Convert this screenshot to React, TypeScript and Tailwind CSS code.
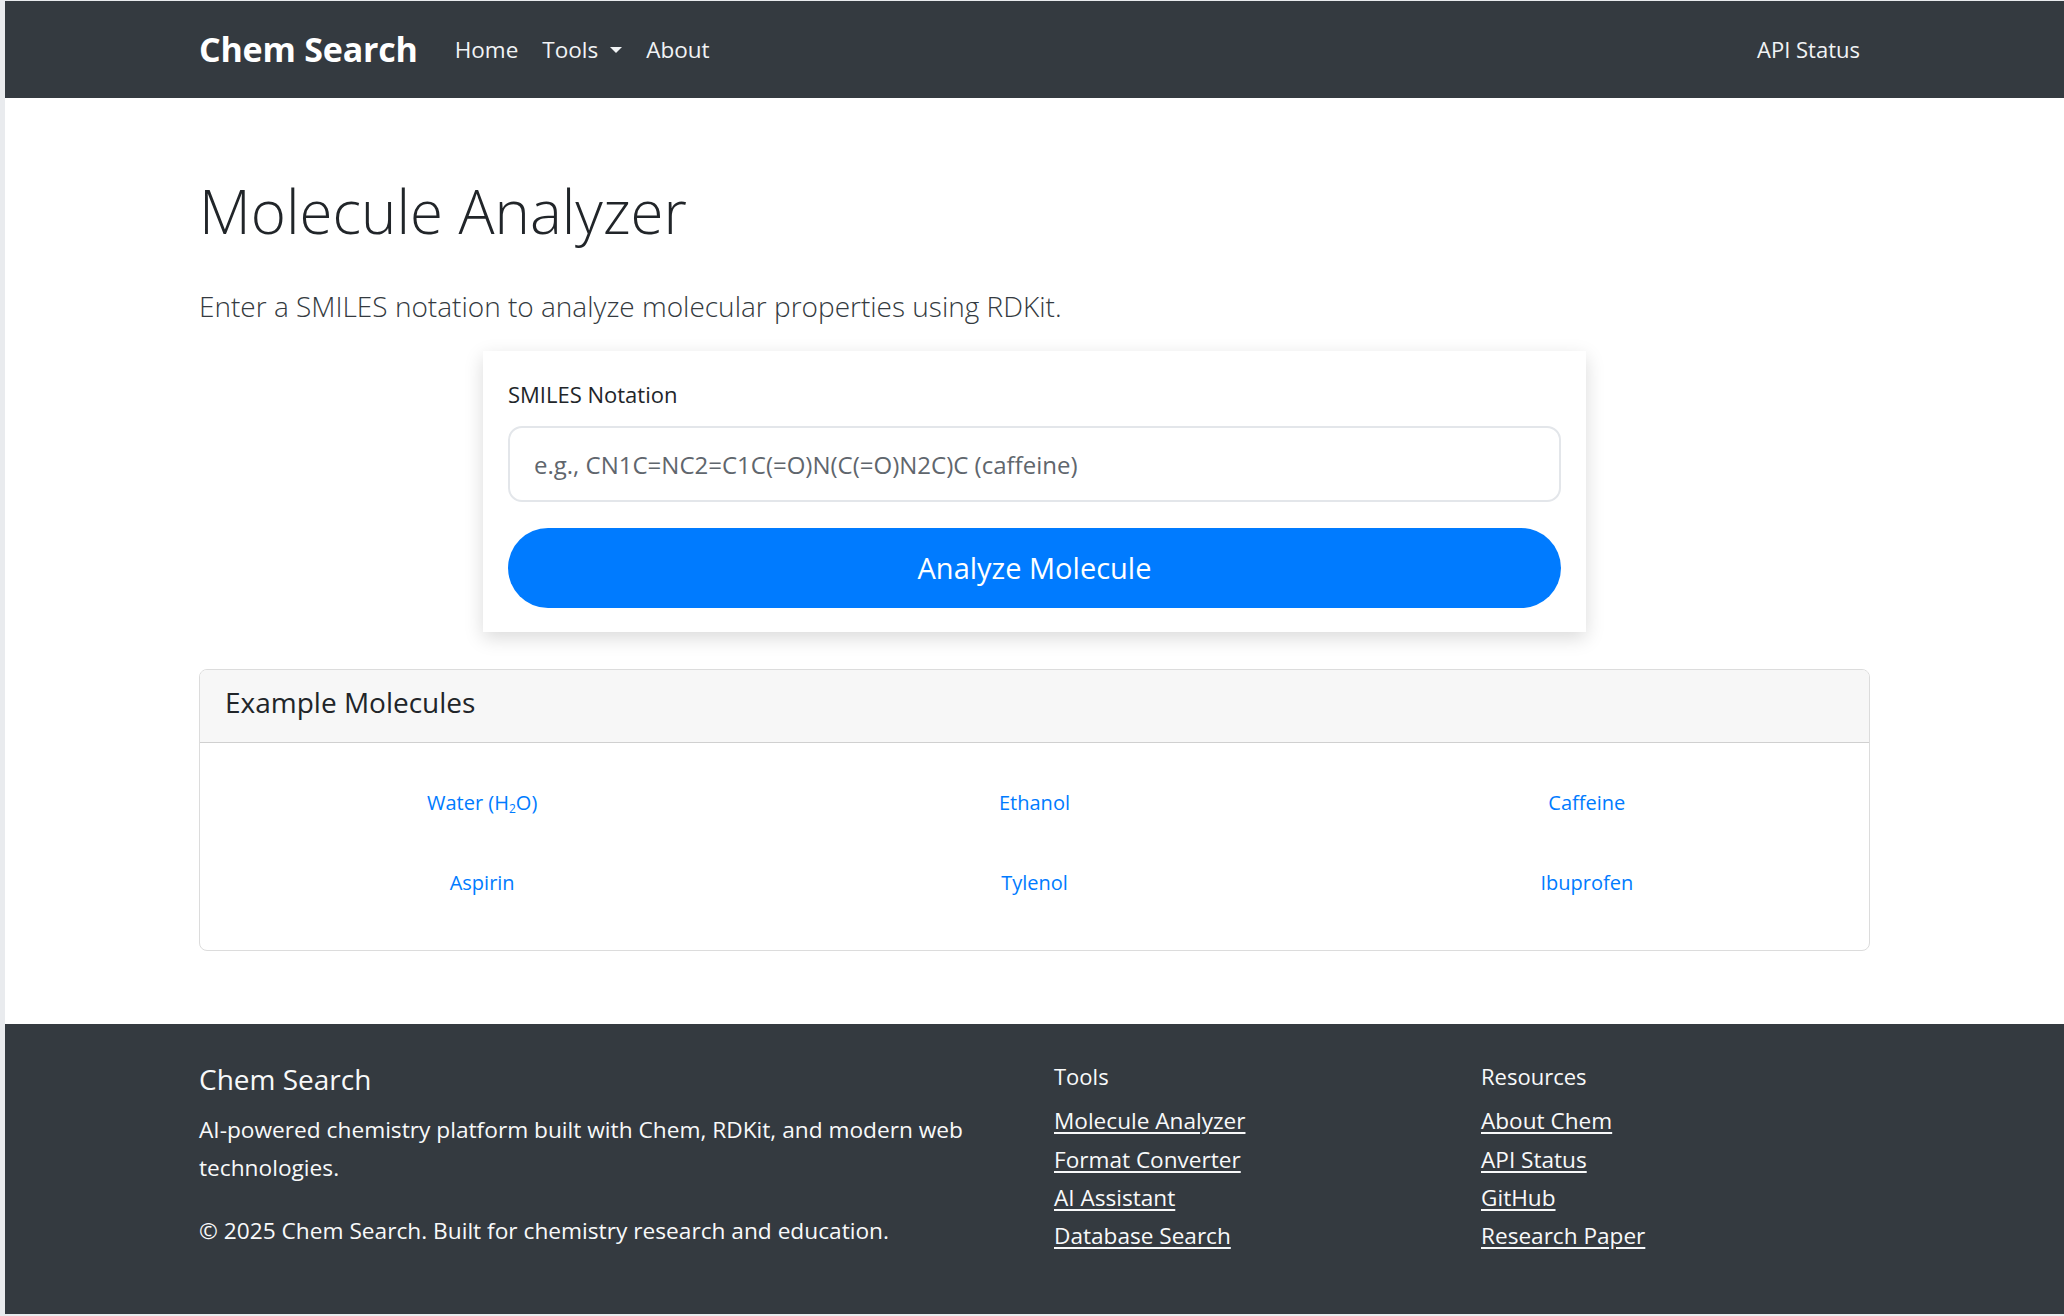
import React, { useState } from 'react';

const examples = [
  { name: 'Water', smiles: 'O' },
  { name: 'Ethanol', smiles: 'CCO' },
  { name: 'Caffeine', smiles: 'CN1C=NC2=C1C(=O)N(C(=O)N2C)C' },
  { name: 'Aspirin', smiles: 'CC(=O)OC1=CC=CC=C1C(=O)O' },
  { name: 'Tylenol', smiles: 'CC(=O)NC1=CC=C(C=C1)O' },
  { name: 'Ibuprofen', smiles: 'CC(C)CC1=CC=C(C=C1)C(C)C(=O)O' },
];

const toolLinks = ['Molecule Analyzer', 'Format Converter', 'AI Assistant', 'Database Search'];
const resourceLinks = ['About Chem', 'API Status', 'GitHub', 'Research Paper'];

const Navbar: React.FC = () => (
  <nav className="h-[97px] bg-[#343a40] flex items-center">
    <div className="w-full pl-[194px] pr-[204px] flex items-center">
      <a href="#" className="text-white font-bold text-[34px] mr-[37px] tracking-[-0.2px]">Chem Search</a>
      <div className="flex items-center gap-[24px] text-[22.5px] text-[#f1f3f5]">
        <a href="#">Home</a>
        <a href="#" className="flex items-center">
          Tools
          <span className="ml-[12px] w-0 h-0 border-l-[6px] border-r-[6px] border-t-[6px] border-l-transparent border-r-transparent border-t-[#f1f3f5]" />
        </a>
        <a href="#">About</a>
      </div>
      <a href="#" className="ml-auto text-[22px] text-[#f1f3f5]">API Status</a>
    </div>
  </nav>
);

export default function App() {
  const [smiles, setSmiles] = useState('');

  return (
    <div
      className="min-h-screen bg-white border-l-[5px] border-t border-b-[3px] border-[#e9ebee] text-[#212529]"
      style={{ fontFamily: '"Open Sans", "Noto Sans", sans-serif' }}
    >
      <Navbar />

      <main className="px-[194px]">
        <h1 className="mt-[77px] text-[60px] leading-[1.2] font-light text-[#212529]">Molecule Analyzer</h1>
        <p className="mt-[38px] text-[28px] leading-[1.5] font-light text-[#343a40]">
          Enter a SMILES notation to analyze molecular properties using RDKit.
        </p>

        <div className="mt-[24px] mx-auto w-[1103px] bg-white shadow-[0_6px_18px_rgba(0,0,0,0.15)] px-[25px] pt-[27px] pb-[24px]">
          <label className="block text-[22px] leading-[1.5] text-[#212529]">SMILES Notation</label>
          <input
            value={smiles}
            onChange={(e) => setSmiles(e.target.value)}
            placeholder="e.g., CN1C=NC2=C1C(=O)N(C(=O)N2C)C (caffeine)"
            className="mt-[15px] w-full h-[76px] rounded-[14px] border-2 border-[#e3e6ea] px-[24px] text-[24px] text-[#495057] placeholder:text-[#5f666d] focus:outline-none"
          />
          <button className="mt-[26px] w-full h-[80px] rounded-full bg-[#007bff] text-white text-[29px]">
            Analyze Molecule
          </button>
        </div>

        <div className="mt-[37px] border border-[#dcdcdc] rounded-[8px] overflow-hidden">
          <div className="h-[73px] bg-[#f7f7f7] border-b border-[#d0d0d0] flex items-center px-[25px] pb-[7px]">
            <h5 className="text-[28px] leading-[1.2] text-[#212529]">Example Molecules</h5>
          </div>
          <div className="px-[6px] pt-[20px] pb-[27px] grid grid-cols-3">
            {examples.map((m) => (
              <div key={m.name} className="h-[80px] flex items-center justify-center">
                <button onClick={() => setSmiles(m.smiles)} className="text-[20px] text-[#007bff]">
                  {m.name === 'Water' ? (
                    <>
                      Water (H<sub className="text-[12px]">2</sub>O)
                    </>
                  ) : (
                    m.name
                  )}
                </button>
              </div>
            ))}
          </div>
        </div>
      </main>

      <footer className="mt-[73px] h-[290px] bg-[#343a40] text-[#f8f9fa]">
        <div className="pl-[194px] pt-[39px] grid grid-cols-[855px_427px_1fr]">
          <div>
            <h5 className="text-[28px] leading-[1.2]">Chem Search</h5>
            <p className="mt-[14px] text-[22.7px] leading-[38px] w-[800px]">
              AI-powered chemistry platform built with Chem, RDKit, and modern web technologies.
            </p>
            <p className="mt-[25px] text-[22.7px] leading-[38px]">
              © 2025 Chem Search. Built for chemistry research and education.
            </p>
          </div>
          <div>
            <h6 className="text-[22px] leading-[1.2]">Tools</h6>
            <ul className="mt-[13px] text-[22.6px] leading-[38.3px]">
              {toolLinks.map((l) => (
                <li key={l}>
                  <a href="#" className="underline underline-offset-[3px]">{l}</a>
                </li>
              ))}
            </ul>
          </div>
          <div>
            <h6 className="text-[22px] leading-[1.2]">Resources</h6>
            <ul className="mt-[13px] text-[22.6px] leading-[38.3px]">
              {resourceLinks.map((l) => (
                <li key={l}>
                  <a href="#" className="underline underline-offset-[3px]">{l}</a>
                </li>
              ))}
            </ul>
          </div>
        </div>
      </footer>
    </div>
  );
}
